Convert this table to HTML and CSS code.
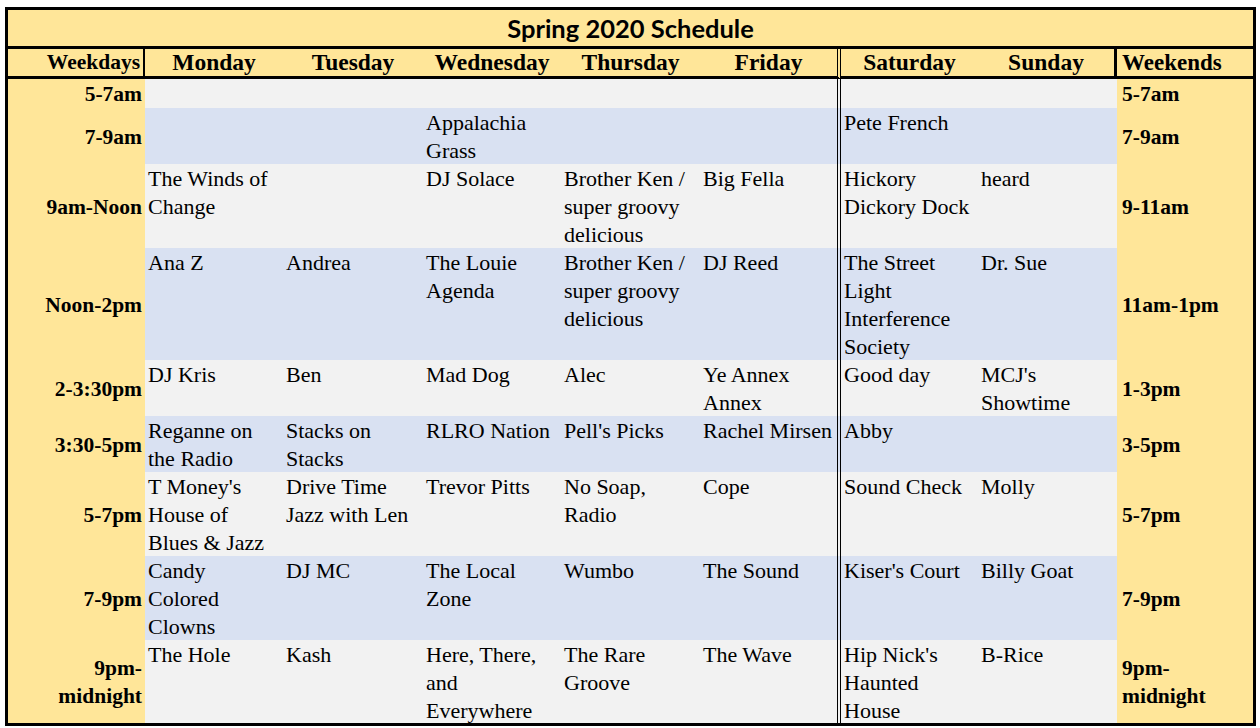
FILE: index.html
```html
<!DOCTYPE html>
<html>
<head>
<meta charset="utf-8">
<link rel="stylesheet" href="styles.css">
</head>
<body>
<div class="page">
<div class="sheet">
  <div class="title">Spring 2020 Schedule</div>

  <div class="row head">
    <div class="h h-wd">Weekdays</div>
    <div class="h">Monday</div>
    <div class="h">Tuesday</div>
    <div class="h">Wednesday</div>
    <div class="h">Thursday</div>
    <div class="h fri">Friday</div>
    <div class="h">Saturday</div>
    <div class="h h-sun">Sunday</div>
    <div class="h h-we">Weekends</div>
  </div>

  <div class="row g r1">
    <div class="t wd">5-7am</div>
    <div class="d"></div><div class="d"></div><div class="d"></div><div class="d"></div><div class="d fri"></div>
    <div class="d"></div><div class="d"></div>
    <div class="t we">5-7am</div>
  </div>

  <div class="row b">
    <div class="t wd">7-9am</div>
    <div class="d"></div><div class="d"></div><div class="d">Appalachia<br>Grass</div><div class="d"></div><div class="d fri"></div>
    <div class="d">Pete French</div><div class="d"></div>
    <div class="t we">7-9am</div>
  </div>

  <div class="row g">
    <div class="t wd">9am-Noon</div>
    <div class="d">The Winds of<br>Change</div><div class="d"></div><div class="d">DJ Solace</div><div class="d">Brother Ken /<br>super groovy<br>delicious</div><div class="d fri">Big Fella</div>
    <div class="d">Hickory<br>Dickory Dock</div><div class="d">heard</div>
    <div class="t we">9-11am</div>
  </div>

  <div class="row b">
    <div class="t wd">Noon-2pm</div>
    <div class="d">Ana Z</div><div class="d">Andrea</div><div class="d">The Louie<br>Agenda</div><div class="d">Brother Ken /<br>super groovy<br>delicious</div><div class="d fri">DJ Reed</div>
    <div class="d">The Street<br>Light<br>Interference<br>Society</div><div class="d">Dr. Sue</div>
    <div class="t we">11am-1pm</div>
  </div>

  <div class="row g">
    <div class="t wd">2-3:30pm</div>
    <div class="d">DJ Kris</div><div class="d">Ben</div><div class="d">Mad Dog</div><div class="d">Alec</div><div class="d fri">Ye Annex<br>Annex</div>
    <div class="d">Good day</div><div class="d">MCJ's<br>Showtime</div>
    <div class="t we">1-3pm</div>
  </div>

  <div class="row b">
    <div class="t wd">3:30-5pm</div>
    <div class="d">Reganne on<br>the Radio</div><div class="d">Stacks on<br>Stacks</div><div class="d">RLRO Nation</div><div class="d">Pell's Picks</div><div class="d fri">Rachel Mirsen</div>
    <div class="d">Abby</div><div class="d"></div>
    <div class="t we">3-5pm</div>
  </div>

  <div class="row g">
    <div class="t wd">5-7pm</div>
    <div class="d">T Money's<br>House of<br>Blues &amp; Jazz</div><div class="d">Drive Time<br>Jazz with Len</div><div class="d">Trevor Pitts</div><div class="d">No Soap,<br>Radio</div><div class="d fri">Cope</div>
    <div class="d">Sound Check</div><div class="d">Molly</div>
    <div class="t we">5-7pm</div>
  </div>

  <div class="row b">
    <div class="t wd">7-9pm</div>
    <div class="d">Candy<br>Colored<br>Clowns</div><div class="d">DJ MC</div><div class="d">The Local<br>Zone</div><div class="d">Wumbo</div><div class="d fri">The Sound</div>
    <div class="d">Kiser's Court</div><div class="d">Billy Goat</div>
    <div class="t we">7-9pm</div>
  </div>

  <div class="row g">
    <div class="t wd">9pm-<br>midnight</div>
    <div class="d">The Hole</div><div class="d">Kash</div><div class="d">Here, There,<br>and<br>Everywhere</div><div class="d">The Rare<br>Groove</div><div class="d fri">The Wave</div>
    <div class="d">Hip Nick's<br>Haunted<br>House</div><div class="d">B-Rice</div>
    <div class="t we">9pm-<br>midnight</div>
  </div>
</div>
</div>
</body>
</html>
```

FILE: styles.css
```css
* { box-sizing: border-box; }

html, body {
  margin: 0;
  padding: 0;
  background: #ffffff;
}

.page {
  padding: 7px 0 0 5px;
}

.sheet {
  width: 1251px;
  border: 3px solid #000;
  display: grid;
  grid-template-columns: 137px 138px 140px 138px 139px 141px 137px 139px 136px;
  grid-template-rows: 39px 30px 29px 56px 84px 112px 56px 56px 84px 84px 83px;
  font-family: "Liberation Serif", "Times New Roman", serif;
  color: #000;
}

.row {
  display: contents;
}

.title {
  grid-column: 1 / -1;
  background: #FFE699;
  border-bottom: 3px solid #000;
  font-family: "Lato", "Liberation Sans", sans-serif;
  font-weight: 700;
  font-size: 25.5px;
  display: flex;
  align-items: center;
  justify-content: center;
}

.h {
  background: #FFE699;
  border-bottom: 3px solid #000;
  font-weight: 700;
  font-size: 23.5px;
  display: flex;
  align-items: center;
  justify-content: center;
  white-space: nowrap;
}

.h-wd {
  justify-content: flex-end;
  border-right: 2px solid #000;
  padding-right: 3px;
  font-size: 21.5px;
}

.h-sun {
  border-right: 3px solid #000;
}

.h-we {
  justify-content: flex-start;
  padding-left: 5px;
  font-size: 23px;
}

.fri {
  border-right: 4px double #000;
}

.t {
  background: #FFE699;
  font-weight: 700;
  font-size: 21.5px;
  line-height: 28px;
  display: flex;
  flex-direction: column;
  justify-content: center;
  white-space: nowrap;
  padding-top: 1px;
}

.wd {
  text-align: right;
  padding-right: 3px;
}

.we {
  text-align: left;
  padding-left: 5px;
}

.d {
  font-size: 22px;
  line-height: 28px;
  padding-left: 3px;
  padding-top: 1px;
  white-space: nowrap;
  overflow: hidden;
}

.g > .d { background: #F2F2F2; }
.b > .d { background: #D9E1F2; }
```
